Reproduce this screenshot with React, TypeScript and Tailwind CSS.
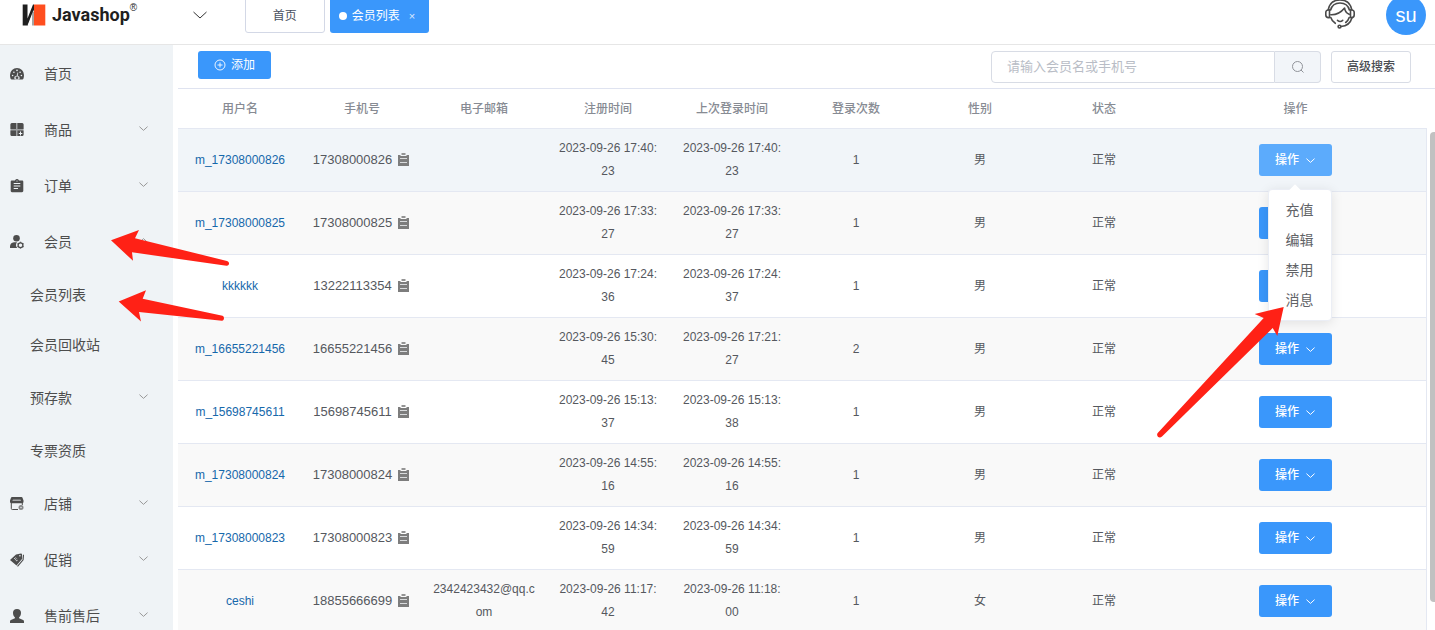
import { useState, type ReactNode } from 'react'
import clsx from 'clsx'

type Member = {
  name: string
  mobile: string
  email?: string
  registered: string
  lastLogin: string
  logins: number
  sex: string
}

type MenuItem = {
  label: string
  icon?: ReactNode
  arrow?: 'down' | 'up'
  child?: boolean
}

const members: Member[] = [
  { name: 'm_17308000826', mobile: '17308000826', registered: '2023-09-26 17:40:23', lastLogin: '2023-09-26 17:40:23', logins: 1, sex: '男' },
  { name: 'm_17308000825', mobile: '17308000825', registered: '2023-09-26 17:33:27', lastLogin: '2023-09-26 17:33:27', logins: 1, sex: '男' },
  { name: 'kkkkkk', mobile: '13222113354', registered: '2023-09-26 17:24:36', lastLogin: '2023-09-26 17:24:37', logins: 1, sex: '男' },
  { name: 'm_16655221456', mobile: '16655221456', registered: '2023-09-26 15:30:45', lastLogin: '2023-09-26 17:21:27', logins: 2, sex: '男' },
  { name: 'm_15698745611', mobile: '15698745611', registered: '2023-09-26 15:13:37', lastLogin: '2023-09-26 15:13:38', logins: 1, sex: '男' },
  { name: 'm_17308000824', mobile: '17308000824', registered: '2023-09-26 14:55:16', lastLogin: '2023-09-26 14:55:16', logins: 1, sex: '男' },
  { name: 'm_17308000823', mobile: '17308000823', registered: '2023-09-26 14:34:59', lastLogin: '2023-09-26 14:34:59', logins: 1, sex: '男' },
  { name: 'ceshi', mobile: '18855666699', email: '2342423432@qq.com', registered: '2023-09-26 11:17:42', lastLogin: '2023-09-26 11:18:00', logins: 1, sex: '女' },
]

const columns = ['用户名', '手机号', '电子邮箱', '注册时间', '上次登录时间', '登录次数', '性别', '状态', '操作']
const actions = ['充值', '编辑', '禁用', '消息']

function Chevron({ className, up }: { className?: string; up?: boolean }) {
  return (
    <svg viewBox="0 0 14 8" fill="none" stroke="currentColor" className={className} aria-hidden="true">
      <path d={up ? 'M.5 7 7 1l6.500 6' : 'M.5 1 7 7l6.500-6'} vectorEffect="non-scaling-stroke" />
    </svg>
  )
}

function MenuIcon({ children }: { children: ReactNode }) {
  return (
    <svg viewBox="0 0 14 14" className="size-3.5 shrink-0" fill="currentColor" aria-hidden="true">
      {children}
    </svg>
  )
}

const menu: MenuItem[] = [
  {
    label: '首页',
    icon: (
      <MenuIcon>
        <path d="M7 1a7 7 0 0 0-7 7c0 1.500.2 2.700.6 3.800.2.500.6.700 1 .7h10.800c.4 0 .8-.2 1-.7.400-1.100.6-2.300.6-3.800a7 7 0 0 0-7-7z" />
        <g fill="#eff3f6">
          <circle cx="2.600" cy="8.500" r=".8" />
          <circle cx="3.900" cy="5.200" r=".8" />
          <circle cx="7" cy="3.400" r=".8" />
          <circle cx="10.100" cy="5.200" r=".8" />
          <circle cx="11.400" cy="8.500" r=".8" />
          <path d="M7.400 5.500 8.200 5.600 7.900 9a1.900 1.900 0 0 1 1 3.500H5.100A1.900 1.900 0 0 1 6.500 9z" opacity=".8" />
        </g>
        <circle cx="7" cy="10.700" r="1.200" />
      </MenuIcon>
    ),
  },
  {
    label: '商品',
    arrow: 'down',
    icon: (
      <MenuIcon>
        <rect width="13" height="13" x=".5" y="0" rx="1.500" opacity=".5" />
        <path d="M2 0h4v6H.5V1.500A1.500 1.500 0 0 1 2 0zM7.500 0H12a1.500 1.500 0 0 1 1.500 1.500V6h-6zM.5 7.500H6V13H2a1.500 1.500 0 0 1-1.500-1.500zM7.500 7.500h6v4A1.500 1.500 0 0 1 12 13H7.500z" />
        <path d="M10.500 8.500v4M8.800 10.500h3.500" stroke="#eff3f6" strokeWidth="1" />
      </MenuIcon>
    ),
  },
  {
    label: '订单',
    arrow: 'down',
    icon: (
      <MenuIcon>
        <path d="M2 1.500h3A2 2 0 0 1 7 0a2 2 0 0 1 2 1.500h3c.8 0 1.300.5 1.300 1.300v9c0 .8-.5 1.400-1.300 1.400H2c-.8 0-1.300-.6-1.300-1.400v-9C.7 2 1.200 1.500 2 1.500z" />
        <path d="M3.700 4.500h6.600M3.700 7h6.600M3.700 9.500H8" stroke="#eff3f6" strokeWidth="1.100" />
        <circle cx="7" cy="2" r=".6" fill="#eff3f6" />
      </MenuIcon>
    ),
  },
  {
    label: '会员',
    arrow: 'up',
    icon: (
      <MenuIcon>
        <circle cx="6.500" cy="3.300" r="3.300" />
        <path d="M0 13v-1.500C0 9.300 1.500 7.500 4 7.300h3a4.500 4.500 0 0 0 .2 5.700z" />
        <circle cx="10.500" cy="10.200" r="2.400" fill="none" stroke="currentColor" strokeWidth="1.300" />
        <path
          d="M10.500 6.800v1M10.500 12.600v1M7.600 8.500l.8.500M12.600 11.400l.9.500M7.600 11.900l.8-.5M12.600 9l.9-.5"
          stroke="currentColor"
          strokeWidth="1.300"
        />
      </MenuIcon>
    ),
  },
  { label: '会员列表', child: true },
  { label: '会员回收站', child: true },
  { label: '预存款', arrow: 'down', child: true },
  { label: '专票资质', child: true },
  {
    label: '店铺',
    arrow: 'down',
    icon: (
      <MenuIcon>
        <path d="M2 0h9.500c.5 0 .9.300 1 .7l1 2.800V5a1.500 1.500 0 0 1-1.500 1.300H1.500A1.500 1.500 0 0 1 0 5V3.500L1 .7c.1-.4.5-.7 1-.7z" />
        <path d="M3 2.500h7.500l.6 1.500H2.300z" fill="#eff3f6" opacity=".55" />
        <path d="M1.300 6v5.500c0 .6.3 1 1 1H8M12.300 6v2" fill="none" stroke="currentColor" strokeWidth="1" />
        <circle cx="11" cy="10.500" r="2.500" opacity=".65" />
        <circle cx="11" cy="10.500" r=".7" fill="#eff3f6" />
      </MenuIcon>
    ),
  },
  {
    label: '促销',
    arrow: 'down',
    icon: (
      <MenuIcon>
        <path d="M0 7 6 1.500 11 .5c.6 0 1 .3 1 .8l.2 4.500-5.700 6.700z" />
        <path d="m7.500 13.300 5.600-6.500.4-5" fill="none" stroke="currentColor" strokeWidth="1.100" />
        <circle cx="9.900" cy="2.700" r=".8" fill="#eff3f6" />
        <path d="M4 5.800c.8-.8 1.500.2 1.700 1 .3.900 1.300 1.300 1.900.4M5.600 4.500l1 1" fill="none" stroke="#eff3f6" strokeWidth=".9" />
      </MenuIcon>
    ),
  },
  {
    label: '售前售后',
    arrow: 'down',
    icon: (
      <MenuIcon>
        <path d="M7 0c2.600 0 4 1.600 4 3.800 0 1.900-.7 3.600-1.900 4.500v1l4 1.600c.6.300.9.800.9 1.500V14H0v-1.600c0-.7.3-1.200.9-1.500l4-1.600v-1C3.700 7.400 3 5.700 3 3.800 3 1.600 4.400 0 7 0z" />
      </MenuIcon>
    ),
  },
]

function Logo() {
  return (
    <div className="flex items-center gap-1.5 pl-[22px]">
      <svg viewBox="0 0 24 22" className="h-[22px] w-6" aria-hidden="true">
        <path d="M.7.500h4.800v14L11 .500h1V6L6 21.500H.7z" fill="#1f1f1f" />
        <path d="M5.500 21.500 11.500 6v15.500z" fill="#fff" />
        <path d="M12 .500h11.300v21H12z" fill="#ff4e1f" />
        <path d="M11 8v13.500" stroke="#1f1f1f" strokeWidth=".8" />
      </svg>
      <span className="relative font-['Roboto'] text-lg leading-6 font-bold text-[#1f1f1f]">
        Javashop
        <span className="absolute -top-px left-full font-['Liberation_Sans'] text-[10px] leading-3 font-normal">®</span>
      </span>
    </div>
  )
}

function ServiceIcon() {
  return (
    <svg viewBox="0 0 30 30" className="size-[30px]" fill="none" stroke="#4a4a4a" strokeWidth="1.600" strokeLinecap="round" strokeLinejoin="round" aria-hidden="true">
      <path d="M3.300 9.500C4.500 3.500 9 0 15 0s10.500 3.500 11.700 9.500" />
      <path d="M5.600 10C6.800 5.500 10.500 3 15 3s8.200 2.500 9.400 7" />
      <path d="M4.500 9.800c-2.400 0-3.700 1-3.700 2.700v2.500c0 1.700 1.200 2.600 2.700 2.600h1zM25.500 9.800c2.400 0 3.700 1 3.700 2.700v2.500c0 1.700-1.200 2.600-2.700 2.600h-1z" />
      <path d="M5.800 14.800c4.500.2 9.500-1.500 13.800-6.800.2 2.800 1.700 5 4.600 6.300" />
      <path d="M5.800 17.600c.8 2.700 2.300 4.500 4.500 5.700M24.200 17.600c-.6 2-1.800 3.700-3.500 4.900" />
      <path d="M12.500 20.300c1.500 1.300 3.800 1.300 5.200 0" />
      <path d="M27 17.800c-1.400 5-5 8.300-11 8.700" />
      <circle cx="14.500" cy="26.600" r="1.400" />
    </svg>
  )
}

function CopyIcon() {
  return (
    <svg viewBox="0 0 11 13" className="h-[13px] w-[11px]" aria-hidden="true">
      <path d="M0 2h2.500v1h6V2H11v11H0z" fill="#7d7d7d" />
      <path d="M3.500 0h4v2h-4z" fill="#949494" />
      <path d="M2 5.500h7M2 9.500h7" stroke="#d9dbdd" strokeWidth="1" />
    </svg>
  )
}

function Sidebar() {
  return (
    <nav className="w-[173px] shrink-0 bg-[#eff3f6] pt-px text-sm text-[#4d4d4d]">
      {menu.map((item) => (
        <a
          key={item.label}
          href="#"
          className={clsx(
            'flex items-center pr-[25px]',
            item.child ? 'pl-[30px]' : 'pl-2.5',
            item.child && !item.arrow ? 'h-[50px]' : 'h-14',
          )}
        >
          {item.icon}
          <span className={clsx('flex-1', item.icon && 'pl-5')}>{item.label}</span>
          {item.arrow ? <Chevron up={item.arrow === 'up'} className="mb-1 h-[5px] w-[9px] text-[#999]" /> : null}
        </a>
      ))}
    </nav>
  )
}

function ActionMenu() {
  return (
    <ul className="absolute top-[45px] right-0 z-10 w-[64px] rounded border border-[#ebeef5] bg-white py-[5px] text-left text-sm text-[#606266] shadow-[0_2px_12px_rgba(0,0,0,0.1)]">
      <li aria-hidden="true" className="absolute -top-1 left-[22px] size-2 rotate-45 bg-white" />
      {actions.map((action) => (
        <li key={action}>
          <button type="button" className="block h-[30px] w-full pl-[17px] text-left">
            {action}
          </button>
        </li>
      ))}
    </ul>
  )
}

// Hand-drawn pointer laid over the page
function Pointer({ className, viewBox, d }: { className: string; viewBox: string; d: string }) {
  return (
    <svg viewBox={viewBox} className={clsx('pointer-events-none absolute z-20', className)} fill="#ff2116" aria-hidden="true">
      <path d={d} />
    </svg>
  )
}

export default function App() {
  const [openRow, setOpenRow] = useState<number | null>(0)
  const [keyword, setKeyword] = useState('')

  return (
    <div className="relative flex h-screen flex-col overflow-hidden bg-white font-['Liberation_Sans','Noto_Sans_CJK_SC',sans-serif]">
      <header className="h-[45px] shrink-0 border-b border-[#e6e6e6]">
        <div className="-mt-3.5 flex h-[58px] items-center pr-[9px]">
          <Logo />
          <button type="button" aria-label="展开" className="ml-[62px] p-px">
            <Chevron className="h-2 w-3.5 text-[#333]" />
          </button>
          <div className="ml-[37px] flex gap-[5px] text-xs">
            <a href="#" className="flex h-9 w-20 items-center justify-center rounded-[3px] border border-[#d3d8e6] pt-0.5 text-[#495060]">
              首页
            </a>
            <a href="#" className="flex h-9 w-[99px] items-center rounded-[3px] bg-[#3a97fb] pt-0.5 pl-[9px] text-white">
              <span className="size-2 rounded-full bg-white" />
              <span className="pl-[5px]">会员列表</span>
              <span className="pl-[9px] text-[11px] opacity-80">×</span>
            </a>
          </div>
          <div className="ml-auto flex items-center gap-[31px]">
            <ServiceIcon />
            <span className="flex size-10 items-center justify-center rounded-full bg-[#3a97fb] text-xl text-white">su</span>
          </div>
        </div>
      </header>

      <div className="flex min-h-0 flex-1">
        <Sidebar />
        <main className="ml-[5px] flex min-w-0 flex-1 flex-col">
          <div className="flex h-11 shrink-0 items-start border-b border-[#dfe3f0] pt-1.5 pr-6 pl-5 text-xs">
            <button type="button" className="flex h-7 w-[73px] items-center justify-center gap-[5px] rounded-[3px] bg-[#3a97fb] text-white">
              <svg viewBox="0 0 12 12" className="size-3" fill="none" stroke="currentColor" strokeWidth=".9" aria-hidden="true">
                <circle cx="6" cy="6" r="5" />
                <path d="M6 3.500v5M3.500 6h5" />
              </svg>
              添加
            </button>
            <form className="ml-auto flex h-8 w-[330px]" onSubmit={(e) => e.preventDefault()}>
              <input
                type="text"
                aria-label="会员名或手机号"
                value={keyword}
                onChange={(e) => setKeyword(e.target.value)}
                placeholder="请输入会员名或手机号"
                className="min-w-0 flex-1 rounded-l border border-[#d8dce5] px-[15px] text-[13px] text-[#606266] placeholder:text-[#b9bdc6]"
              />
              <button type="submit" aria-label="搜索" className="flex w-[46px] items-center justify-center rounded-r border border-l-0 border-[#d8dce5] bg-[#f2f5f9] text-[#909399]">
                <svg viewBox="0 0 12 12" className="size-3" fill="none" stroke="currentColor" aria-hidden="true">
                  <circle cx="5.500" cy="5.500" r="5" />
                  <path d="m9 9 2.500 2.500" />
                </svg>
              </button>
            </form>
            <button type="button" className="ml-2.5 h-8 w-20 rounded-[3px] border border-[#d8dce5] font-medium text-[#4a4d52]">
              高级搜索
            </button>
          </div>

          <div className="flex min-h-0 flex-1">
            <table className="w-full table-fixed border-separate border-spacing-0 self-start text-center text-xs leading-[23px] text-[#55585e]">
              <colgroup>
                <col className="w-[124px]" />
                <col className="w-[120px]" />
                <col span={6} className="w-[124px]" />
                <col />
              </colgroup>
              <thead>
                <tr className="h-10 text-[#878b93]">
                  {columns.map((column) => (
                    <th key={column} scope="col" className="border-b border-[#e4e8f2] pt-0.5 font-medium last:pr-0.5">
                      {column}
                    </th>
                  ))}
                </tr>
              </thead>
              <tbody>
                {members.map((m, i) => (
                  <tr
                    key={m.name}
                    className={clsx(
                      'h-[63px] [&>td]:border-b [&>td]:border-[#e4e8f2]',
                      i === 0 ? 'bg-[#f1f5f9]' : i % 2 ? 'bg-[#f9f9f9]' : 'bg-white',
                    )}
                  >
                    <td>
                      <a href="#" className="text-[#1668ab]">{m.name}</a>
                    </td>
                    <td className="pr-0.5 pb-0.5">
                      <span className="flex items-center justify-center gap-1.5 text-[13px]">
                        {m.mobile}
                        <CopyIcon />
                      </span>
                    </td>
                    <td className="px-2.5 break-all">{m.email}</td>
                    <td className="px-3 break-all">{m.registered}</td>
                    <td className="px-3 break-all">{m.lastLogin}</td>
                    <td>{m.logins}</td>
                    <td>{m.sex}</td>
                    <td>正常</td>
                    <td className="border-r pr-0.5">
                      <div className="relative mx-auto w-[73px]">
                        <button
                          type="button"
                          aria-expanded={openRow === i}
                          onClick={() => setOpenRow(openRow === i ? null : i)}
                          className={clsx(
                            'flex h-8 w-full items-center justify-center gap-[7px] rounded-[3px] font-medium text-white',
                            openRow === i ? 'bg-[#5cabfc]' : 'bg-[#3a97fb]',
                          )}
                        >
                          操作
                          <Chevron className="h-[5px] w-[9px]" />
                        </button>
                        {openRow === i ? <ActionMenu /> : null}
                      </div>
                    </td>
                  </tr>
                ))}
              </tbody>
            </table>
            <div className="w-2 shrink-0 pt-[43px] pl-[3px]">
              <div className="h-[470px] rounded-l bg-[#c1c1c1]" />
            </div>
          </div>
        </main>
      </div>

      <Pointer
        className="top-[229px] left-[110px] h-[38px] w-[120px]"
        viewBox="110 229 120 38"
        d="M111 240.300 139 230l-4 8.200 92 22.800c3 1 2.600 5-.5 4.700L132 252.300l1 8.500z"
      />
      <Pointer
        className="top-[289px] left-[118px] h-[34px] w-[108px]"
        viewBox="118 289 108 34"
        d="M118.700 301.500 146 290.300l-3.300 8.400 79.800 17.100c2.200.700 2 5.200-.6 5L139 312l2 9.400z"
      />
      <Pointer
        className="top-[305px] right-[149px] h-[134px] w-[130px]"
        viewBox="1156 305 130 134"
        d="M1283.700 307l-29 7 9 4-106 115c-2 2.800 1.500 6 4.300 3.600L1272.700 328l4.600 8z"
      />
    </div>
  )
}
